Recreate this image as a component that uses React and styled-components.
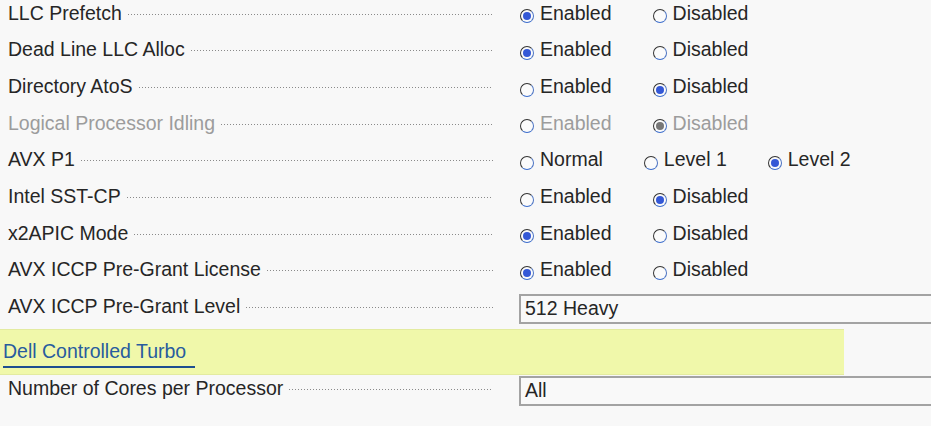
import React from "react";
import styled, { createGlobalStyle } from "styled-components";

const Global = createGlobalStyle`
  html, body {
    margin: 0;
    padding: 0;
    background: #f8f8f8;
    overflow: hidden;
  }
  body {
    min-height: 100vh;
    font-family: "Liberation Sans", Arial, sans-serif;
    font-size: 19.5px;
    color: #262626;
  }
`;

const Page = styled.div`
  display: flex;
  flex-direction: column;
  margin-top: -5px;
  width: 1000px;
`;

const Row = styled.div`
  display: flex;
  align-items: center;
  height: ${(p) => p.$h || 36.67}px;
  color: ${(p) => (p.$disabled ? "#9c9c9c" : "#262626")};
`;

const LabelCell = styled.div`
  display: flex;
  align-items: center;
  flex-shrink: 0;
  width: 493px;
  box-sizing: border-box;
  padding-left: 8px;
  white-space: nowrap;
`;

const Leader = styled.span`
  flex: 1;
  height: 1px;
  margin: 2px 0 0 6px;
  background: repeating-linear-gradient(
    to right,
    #8a8a8a 0 1px,
    transparent 1px 3px
  );
`;

const Control = styled.div`
  display: flex;
  align-items: center;
  margin-left: 26px;
  flex: 1;
`;

const Option = styled.label`
  display: flex;
  align-items: center;
  margin-left: 1px;
  margin-right: 40px;
  color: ${(p) => (p.$disabled ? "#9c9c9c" : "#262626")};
`;

const Radio = styled.span`
  width: 14px;
  height: 14px;
  box-sizing: border-box;
  border-radius: 50%;
  border: 1px solid;
  border-color: #333 #4a72c2 #3a6ccc #333;
  background: #fbfbfb;
  margin: 6px 6px 0 0;
  display: flex;
  align-items: center;
  justify-content: center;
  &::after {
    content: "";
    display: ${(p) => (p.$on ? "block" : "none")};
    width: 8px;
    height: 8px;
    border-radius: 50%;
    background: ${(p) => (p.$disabled ? "#777" : "#3458d6")};
  }
`;

const Select = styled.div`
  width: 500px;
  height: 30px;
  box-sizing: border-box;
  border: 2px solid #a3a3a3;
  margin-top: 4px;
  padding-left: 4px;
  display: flex;
  align-items: center;
  background: #f9f9f9;
`;

const Band = styled.div`
  width: 844px;
  height: 46px;
  box-sizing: border-box;
  margin-top: 4px;
  background: #f0f8aa;
  border-top: 1px solid #e3eba0;
  border-bottom: 1px solid #e3eba0;
`;

const BandLink = styled.a`
  display: inline-block;
  margin: 10px 0 0 3px;
  padding: 0 9px 4px 0;
  line-height: 22px;
  color: #285c9e;
  text-decoration: none;
  border-bottom: 2px solid #1e4f90;
`;

const rows = [
  { label: "LLC Prefetch", options: ["Enabled", "Disabled"], value: 0 },
  { label: "Dead Line LLC Alloc", options: ["Enabled", "Disabled"], value: 0 },
  { label: "Directory AtoS", options: ["Enabled", "Disabled"], value: 1 },
  {
    label: "Logical Processor Idling",
    options: ["Enabled", "Disabled"],
    value: 1,
    disabled: true,
  },
  { label: "AVX P1", options: ["Normal", "Level 1", "Level 2"], value: 2 },
  { label: "Intel SST-CP", options: ["Enabled", "Disabled"], value: 1 },
  { label: "x2APIC Mode", options: ["Enabled", "Disabled"], value: 0 },
  {
    label: "AVX ICCP Pre-Grant License",
    options: ["Enabled", "Disabled"],
    value: 0,
  },
  { label: "AVX ICCP Pre-Grant Level", select: "512 Heavy" },
];

const SettingRow = ({ row, h }) => (
  <Row $disabled={row.disabled} $h={h}>
    <LabelCell>
      {row.label}
      <Leader />
    </LabelCell>
    <Control>
      {row.select ? (
        <Select>{row.select}</Select>
      ) : (
        row.options.map((opt, i) => (
          <Option key={opt} $disabled={row.disabled}>
            <Radio $on={i === row.value} $disabled={row.disabled} />
            {opt}
          </Option>
        ))
      )}
    </Control>
  </Row>
);

const App = () => {
  return (
    <>
      <Global />
      <Page>
        {rows.map((r) => (
          <SettingRow key={r.label} row={r} />
        ))}
        <Band>
          <BandLink>Dell Controlled Turbo</BandLink>
        </Band>
        <SettingRow
          row={{ label: "Number of Cores per Processor", select: "All" }}
          h={28}
        />
      </Page>
    </>
  );
};

export default App;
